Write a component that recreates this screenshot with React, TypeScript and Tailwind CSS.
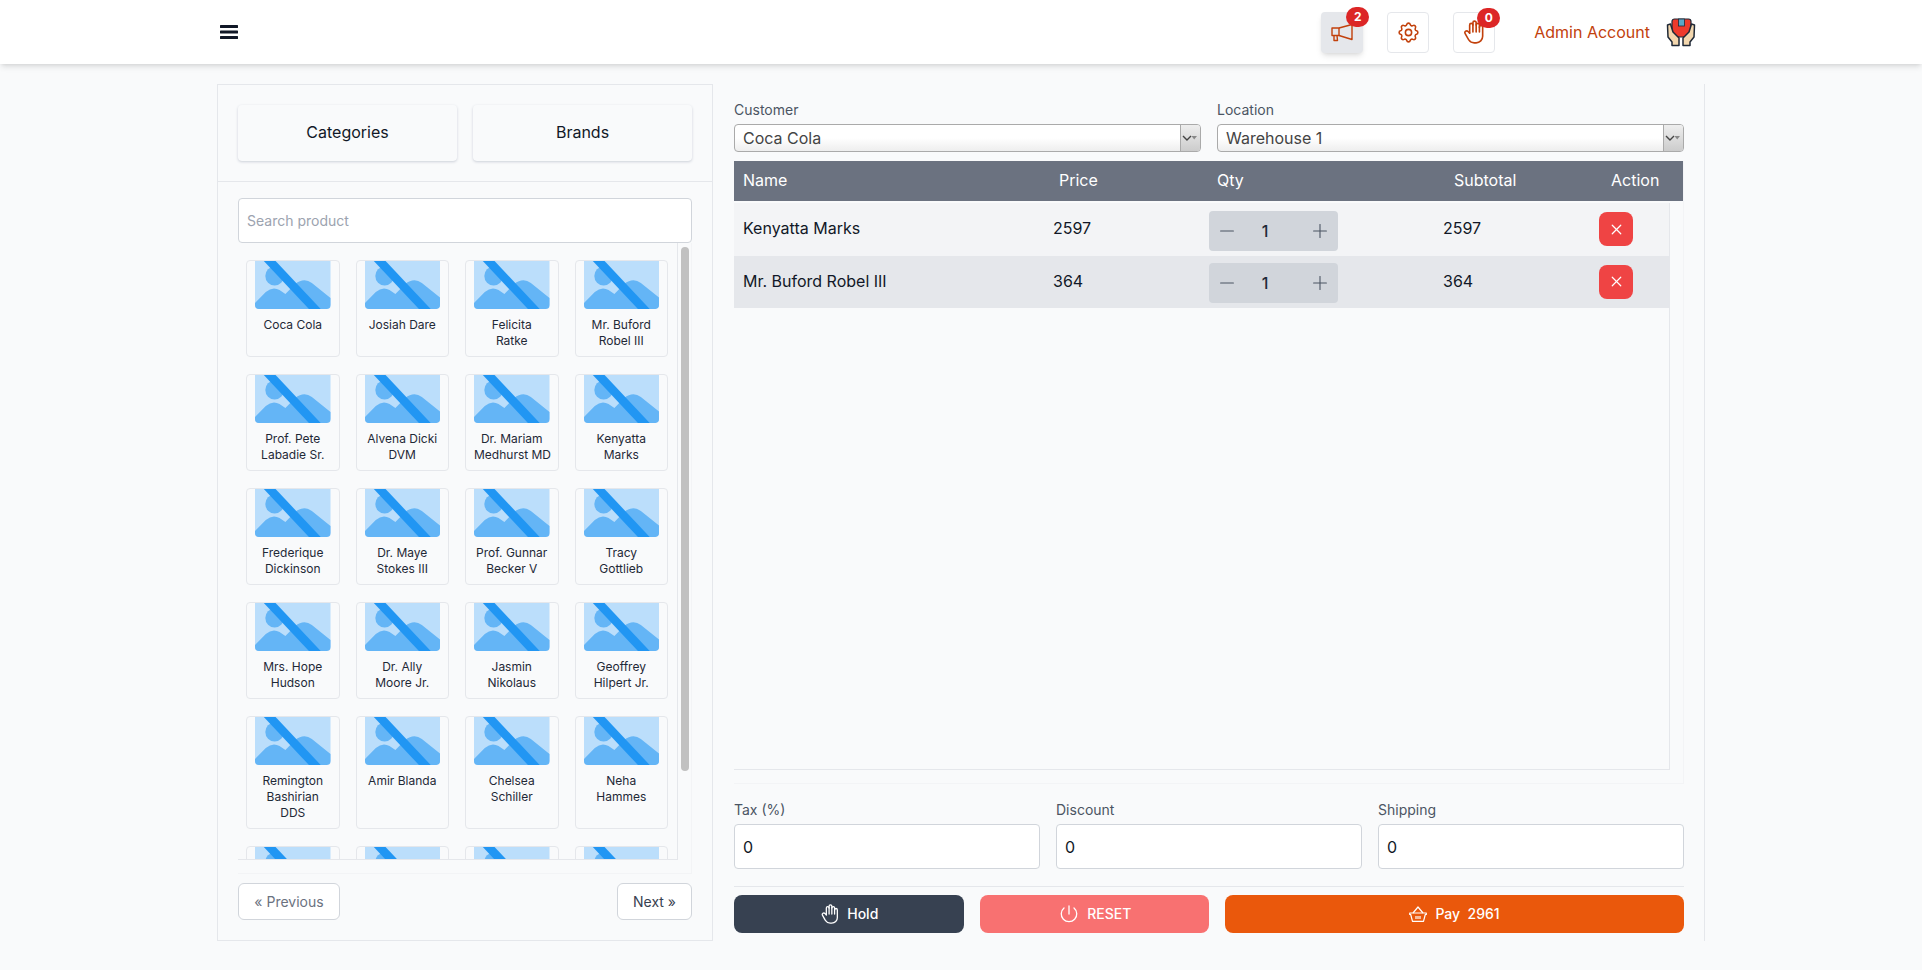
import React from "react";
import { TbSettings, TbHandStop, TbPower, TbMinus, TbPlus, TbX } from "react-icons/tb";

const products = [
  "Coca Cola", "Josiah Dare", "Felicita|Ratke", "Mr. Buford|Robel III",
  "Prof. Pete|Labadie Sr.", "Alvena Dicki|DVM", "Dr. Mariam|Medhurst MD", "Kenyatta|Marks",
  "Frederique|Dickinson", "Dr. Maye|Stokes III", "Prof. Gunnar|Becker V", "Tracy|Gottlieb",
  "Mrs. Hope|Hudson", "Dr. Ally|Moore Jr.", "Jasmin|Nikolaus", "Geoffrey|Hilpert Jr.",
  "Remington|Bashirian|DDS", "Amir Blanda", "Chelsea|Schiller", "Neha|Hammes",
  "", "", "", "",
];

function Placeholder() {
  return (
    <svg viewBox="0 0 77 48" className="block w-full h-[48px]" preserveAspectRatio="none">
      <path d="M0 0H77V48H0Z" fill="#bbdefb" />
      <circle cx="20" cy="15" r="9.5" fill="#64b5f6" />
      <path d="M0 48V42L11 31Q18 25 25 29L31 33L41 23Q50 16 58 22L77 37V44Q77 48 73 48Z" fill="#64b5f6" />
      <path d="M9 0H21L67 48H55Z" fill="#2196f3" />
    </svg>
  );
}

function ProductCard({ name }: { name: string }) {
  return (
    <div className="border border-[#e5e7eb] rounded-[4px] px-2 pb-[7px] text-center text-xs leading-4 text-[#1f2937]">
      <div className="rounded-b-[4px] overflow-hidden mb-2"><Placeholder /></div>
      {name.split("|").filter(Boolean).map((line) => (
        <div key={line} className="whitespace-nowrap">{line}</div>
      ))}
    </div>
  );
}

function FakeSelect({ label, value }: { label: string; value: string }) {
  return (
    <div>
      <div className="text-sm leading-5 text-[#4b5563] mb-1">{label}</div>
      <div className="h-[28px] flex border border-[#aaaaaa] rounded-[4px] bg-gradient-to-b from-white from-50% to-[#eeeeee] overflow-hidden">
        <div className="flex-1 pl-2 text-base leading-[26px] text-[#444444]">{value}</div>
        <div className="w-[20px] border-l border-[#aaaaaa] bg-gradient-to-b from-[#eeeeee] to-[#cccccc] flex items-center justify-center">
          <svg width="17" height="8" viewBox="0 0 17 8">
            <path d="M1 2L5 6L9 2" fill="none" stroke="#444" strokeWidth="1.4" />
            <path d="M9.5 2H15L12.2 5.5Z" fill="#888" />
          </svg>
        </div>
      </div>
    </div>
  );
}

function HeaderIcon({ active, badge, children }: { active?: boolean; badge?: string; children: React.ReactNode }) {
  return (
    <div className={`relative w-[42px] h-[41px] rounded-[4px] flex items-center justify-center text-[#c2410c] ${active ? "bg-[#e5e7eb] shadow-md" : "border border-[#e5e7eb] bg-white"}`}>
      {children}
      {badge && (
        <span className="absolute -top-[5px] -right-[6px] w-[23px] h-[20px] rounded-full bg-[#dc2626] text-white text-xs font-bold flex items-center justify-center">{badge}</span>
      )}
    </div>
  );
}

function Megaphone() {
  return (
    <svg width="22" height="19" viewBox="0 0 22 19" fill="none" stroke="currentColor" strokeWidth="1.4" strokeLinejoin="round">
      <path d="M1 5H8L21 1.5V16.5L8 12.5H1Z" />
      <path d="M8 5V12.5" />
      <path d="M3 12.5V17.5H6.5L6 12.5" />
    </svg>
  );
}

function Basket() {
  return (
    <svg width="18" height="16" viewBox="0 0 18 16" fill="none" stroke="currentColor" strokeWidth="1.2" strokeLinejoin="round">
      <path d="M0.7 7H17.3V8.5H16.3L14.5 15.4H3.5L1.7 8.5H0.7Z" />
      <path d="M4 7L9 1L14 7" />
      <path d="M7 10V13M9 10V13M11 10V13" />
    </svg>
  );
}

function Avatar() {
  return (
    <svg width="30" height="29" viewBox="0 0 30 29">
      <rect x="6" y="1" width="19" height="18" rx="2.5" fill="#ee3a2c" stroke="#1f2937" strokeWidth="1.2" />
      <rect x="12.5" y="1" width="6" height="7" fill="#5aa7c7" stroke="#1f2937" strokeWidth="0.8" />
      <path d="M1.5 7L4.5 6L7 14L9 16L13 20V27.5H6V24L2 19Z" fill="#f3d7ae" stroke="#1f2937" strokeWidth="1.5" strokeLinejoin="round" />
      <path d="M28.5 7L25.5 6L23 14L21 16L17 20V27.5H24V24L28 19Z" fill="#f3d7ae" stroke="#1f2937" strokeWidth="1.5" strokeLinejoin="round" />
    </svg>
  );
}

function Row({ name, price, dark }: { name: string; price: string; dark?: boolean }) {
  return (
    <div className={`flex items-center h-[52.5px] text-base text-[#111827] ${dark ? "bg-[#e5e7eb]" : "bg-[#f3f4f6]"}`}>
      <div className="w-[319px] pl-[9px] pb-[2px]">{name}</div>
      <div className="w-[156px] pb-[2px]">{price}</div>
      <div className="w-[234px] pt-[3px]">
        <div className="w-[129px] h-[40px] bg-[#d1d5db] rounded-[4px] flex items-center text-[#4b5563] px-[7px] justify-between">
          <TbMinus size={22} strokeWidth={1.2} />
          <span className="text-base font-medium text-[#1f2937] -ml-[17px]">1</span>
          <TbPlus size={22} strokeWidth={1.2} />
        </div>
      </div>
      <div className="w-[156px] pb-[2px]">{price}</div>
      <div className="w-[34px] h-[34px] rounded-lg bg-[#ef4444] text-white flex items-center justify-center">
        <TbX size={17} strokeWidth={1.7} />
      </div>
    </div>
  );
}

function NumberField({ label }: { label: string }) {
  return (
    <div>
      <div className="text-sm leading-5 text-[#4b5563] mb-1">{label}</div>
      <div className="h-[45px] border border-[#d1d5db] rounded-[4px] bg-white flex items-center pl-2 text-base text-[#111827]">0</div>
    </div>
  );
}

export default function App() {
  return (
    <div className="min-h-screen bg-[#f9fafb] text-[#111827] [font-family:Inter,'Noto_Sans',sans-serif]">
      <header className="h-[64px] bg-white shadow-md flex items-center pl-[220px] pr-[226px]">
        <svg width="18" height="16" viewBox="0 0 18 16">
          <path d="M1 2.5H17M1 8H17M1 13.5H17" stroke="#111827" strokeWidth="3" strokeLinecap="round" />
        </svg>
        <div className="ml-auto flex items-center">
          <div className="flex gap-6">
            <HeaderIcon active badge="2"><Megaphone /></HeaderIcon>
            <HeaderIcon><TbSettings size={25} strokeWidth={1.5} /></HeaderIcon>
            <HeaderIcon badge="0"><TbHandStop size={26} strokeWidth={1.5} /></HeaderIcon>
          </div>
          <span className="ml-[39px] text-base text-[#c2410c]">Admin Account</span>
          <span className="ml-4"><Avatar /></span>
        </div>
      </header>

      <main className="flex pt-5 pl-[217px] pr-[216px]">
        <section className="w-[496px] h-[857px] border border-[#e5e7eb] flex flex-col">
          <div className="grid grid-cols-2 gap-4 p-5 border-b border-[#e5e7eb]">
            <div className="h-[56px] pb-[2px] rounded-[4px] shadow-sm shadow-gray-300 flex items-center justify-center text-base">Categories</div>
            <div className="h-[56px] pb-[2px] rounded-[4px] shadow-sm shadow-gray-300 flex items-center justify-center text-base">Brands</div>
          </div>
          <div className="px-5 pt-4">
            <div className="h-[45px] border border-[#d1d5db] rounded-[4px] bg-white flex items-center pl-2 text-sm text-[#9ca3af]">Search product</div>
            <div className="flex border-r border-b border-[#f3f4f6] pb-[13px]">
              <div className="flex-1 h-[617px] overflow-hidden border-r border-b border-[#e5e7eb] pl-2 pr-[9px] pt-[17px]">
                <div className="grid grid-cols-4 gap-x-4 gap-y-[17px]">
                  {products.map((p, i) => <ProductCard key={i} name={p} />)}
                </div>
              </div>
              <div className="w-[13px] pl-[3px] pt-1">
                <div className="w-2 h-[524px] rounded-full bg-[#c1c1c1]" />
              </div>
            </div>
            <div className="flex justify-between pt-[9px]">
              <div className="w-[102px] h-[37px] border border-[#d1d5db] rounded-md bg-white flex items-center justify-center text-sm text-[#6b7280]">« Previous</div>
              <div className="w-[75px] h-[37px] border border-[#d1d5db] rounded-md bg-white flex items-center justify-center text-sm text-[#374151]">Next »</div>
            </div>
          </div>
        </section>

        <section className="w-[992px] h-[857px] border-r border-[#e5e7eb] pl-[21px] pr-[20px] pt-4">
          <div className="grid grid-cols-2 gap-4">
            <FakeSelect label="Customer" value="Coca Cola" />
            <FakeSelect label="Location" value="Warehouse 1" />
          </div>

          <div className="mt-[9px] h-[623px] border-r border-b border-[#f3f4f6] flex flex-col">
            <div className="h-[40px] shrink-0 pb-[2px] bg-[#6b7280] text-white text-base flex items-center">
              <div className="w-[325px] pl-[9px]">Name</div>
              <div className="w-[158px]">Price</div>
              <div className="w-[237px]">Qty</div>
              <div className="w-[157px]">Subtotal</div>
              <div>Action</div>
            </div>
            <div className="mt-[2px] mr-[13px] mb-[13px] flex-1 border-r border-b border-[#e5e7eb]">
              <Row name="Kenyatta Marks" price="2597" />
              <Row name="Mr. Buford Robel III" price="364" dark />
            </div>
          </div>

          <div className="grid grid-cols-3 gap-4 mt-4 pb-[17px] border-b border-[#e5e7eb]">
            <NumberField label="Tax (%)" />
            <NumberField label="Discount" />
            <NumberField label="Shipping" />
          </div>

          <div className="grid grid-cols-[1fr_1fr_2fr] gap-4 mt-2 text-white text-sm font-medium">
            <div className="h-[38px] rounded-lg bg-[#374151] flex items-center justify-center gap-[6px]"><TbHandStop size={22} strokeWidth={1.4} />Hold</div>
            <div className="h-[38px] rounded-lg bg-[#f87171] flex items-center justify-center gap-[6px]"><TbPower size={24} strokeWidth={1.3} />RESET</div>
            <div className="h-[38px] rounded-lg bg-[#ea580c] flex items-center justify-center gap-2"><Basket /><span className="whitespace-pre">Pay  2961</span></div>
          </div>
        </section>
      </main>
    </div>
  );
}
